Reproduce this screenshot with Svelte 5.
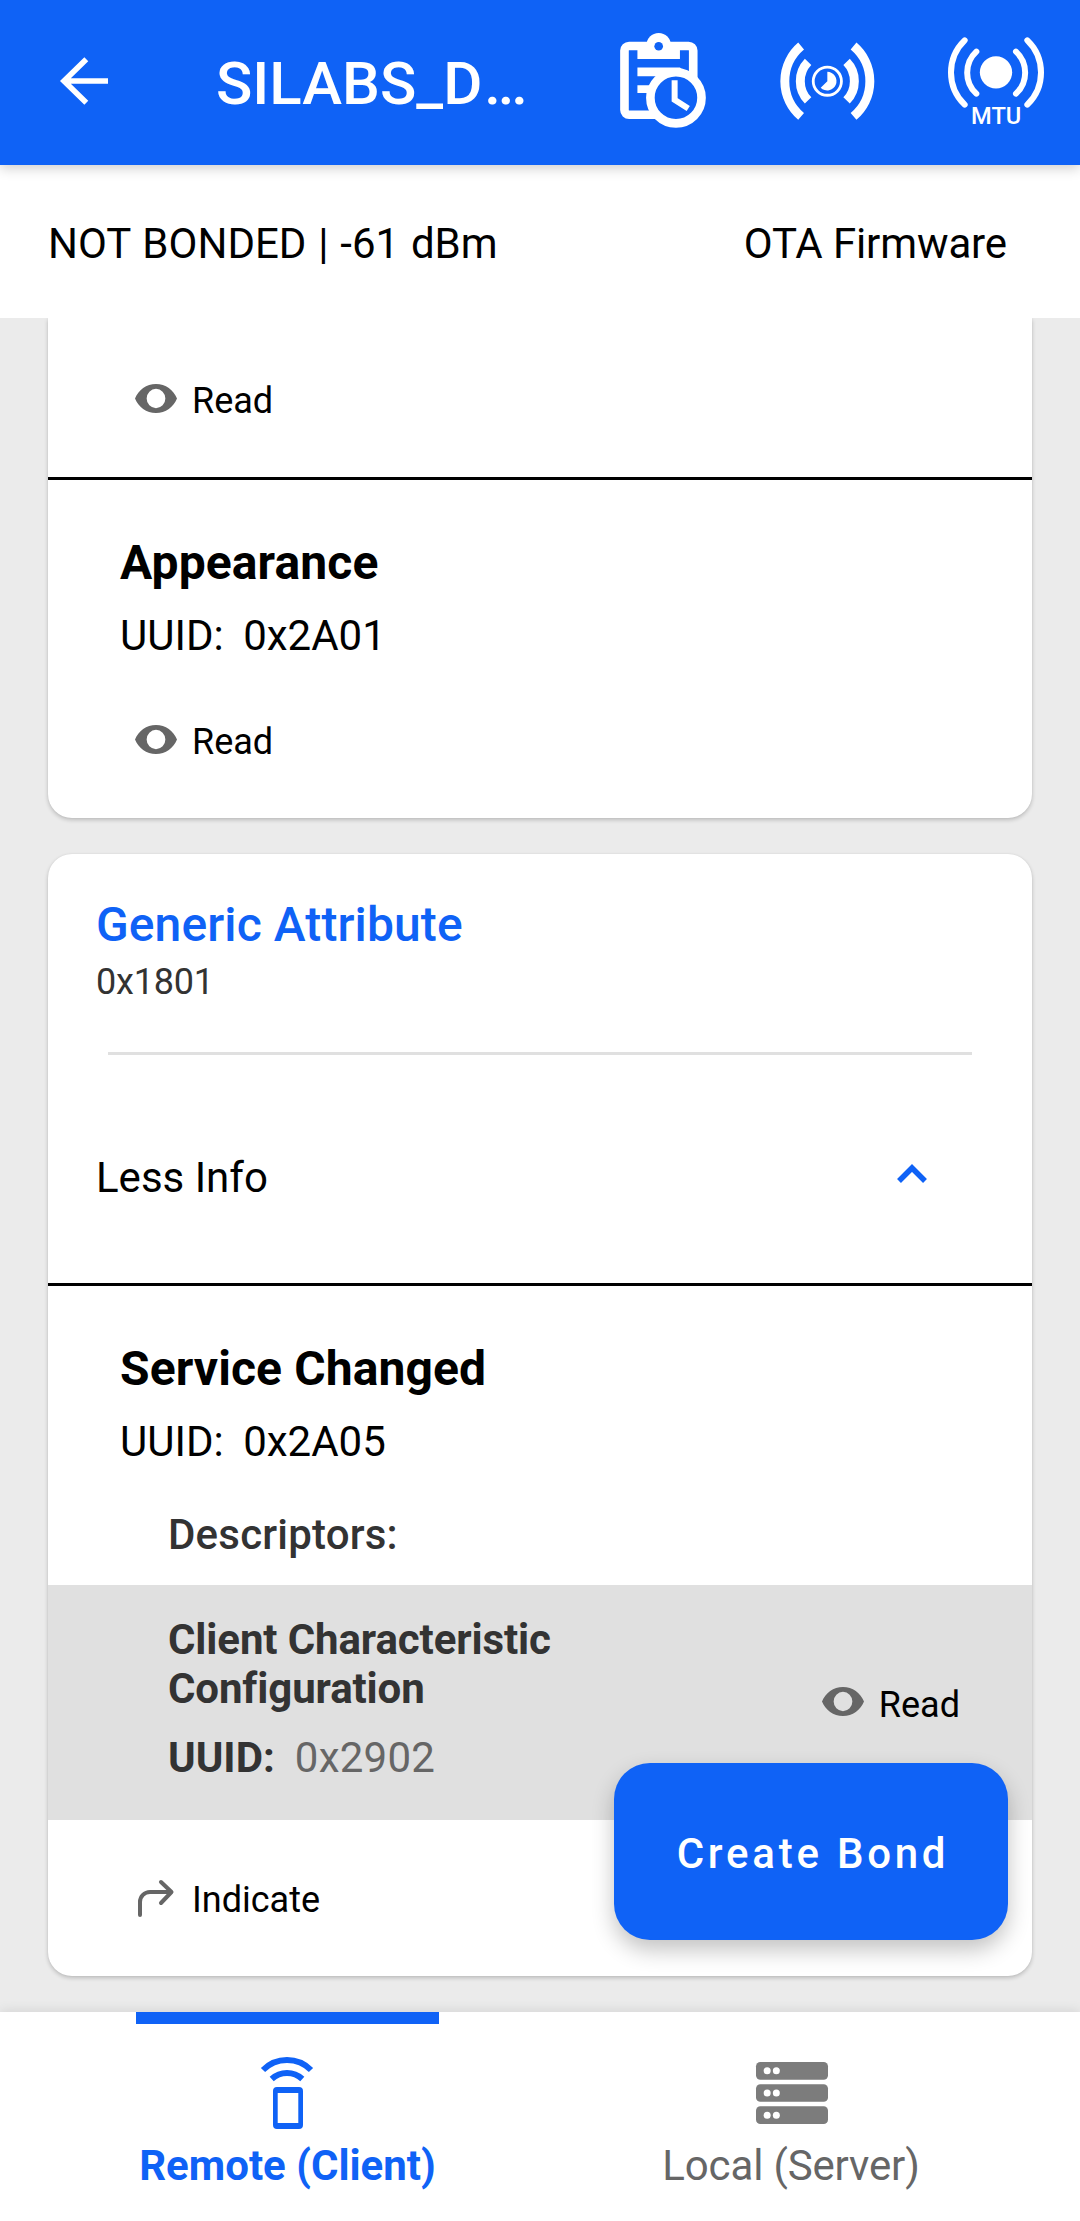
<script>
  const tabs = [
    { id: 'remote', label: 'Remote (Client)', active: true },
    { id: 'local', label: 'Local (Server)', active: false }
  ];
</script>

{#snippet eye()}
  <svg class="eye" viewBox="1 4.5 22 15" preserveAspectRatio="none">
    <path fill-rule="evenodd" d="M12 4.5C7 4.5 2.73 7.61 1 12c1.73 4.39 6 7.5 11 7.5s9.27-3.11 11-7.5c-1.73-4.39-6-7.5-11-7.5zM12 17a4.900 5 0 1 1 0-10 4.900 5 0 0 1 0 10z" />
  </svg>
{/snippet}

{#snippet readAction()}
  <div class="action">
    {@render eye()}
    <span>Read</span>
  </div>
{/snippet}

<div class="screen">
  <header class="appbar">
    <svg class="back" viewBox="0 0 48 48">
      <path d="M26.3 2.2 4 24l22.3 21.8M5 24h43" />
    </svg>
    <h1>SILABS_D<span class="dots">...</span></h1>
    <svg class="clipboard" viewBox="120 98 258 286">
      <rect class="board" x="133" y="137" width="207" height="207" rx="14" />
      <path class="solid" d="M172 140H300V176H172zM172 202H300L330 228H172zM172 255H215V279H172z" />
      <circle class="solid" cx="236" cy="135" r="37" />
      <circle class="hole" cx="236" cy="138" r="13" />
      <circle class="face" cx="288" cy="293" r="77" />
      <path class="hands" d="M284 240V299L325 325" />
    </svg>
    <svg class="phy" viewBox="600 122 285 235">
      <path class="wave" d="M663 134A139 139 0 0 0 663 346M684 182A83.500 83.500 0 0 0 684 298M800 182A83.500 83.500 0 0 1 800 298M821 134A139 139 0 0 1 821 346" />
      <circle class="ring" cx="742" cy="240" r="42.5" />
      <path class="solid" d="M742 240V212A28 28 0 1 1 722 260Z" />
    </svg>
    <svg class="mtu" viewBox="1103 110 288 264">
      <circle class="solid" cx="1247" cy="216" r="48.5" />
      <path class="wave" d="M1153 120A134 134 0 0 0 1153 313M1188 154A86 86 0 0 0 1188 280M1307 154A86 86 0 0 1 1307 280M1341 120A134 134 0 0 1 1341 313" />
      <text x="1247.5" y="371">MTU</text>
    </svg>
  </header>

  <div class="status">
    <span class="bonding">NOT BONDED | -61 dBm</span>
    <span class="ota">OTA Firmware</span>
  </div>

  <main>
    <section class="card continued">
      <div class="characteristic tail">
        {@render readAction()}
      </div>
      <div class="characteristic first">
        <h3>Appearance</h3>
        <p class="uuid">UUID:<span>0x2A01</span></p>
        {@render readAction()}
      </div>
    </section>

    <section class="card">
      <div class="service">
        <h2>Generic Attribute</h2>
        <p>0x1801</p>
      </div>
      <div class="toggle">
        <span>Less Info</span>
        <svg class="chevron" viewBox="0 0 30 18"><path d="M2 16 15 3l13 13" /></svg>
      </div>
      <div class="characteristic second">
        <h3>Service Changed</h3>
        <p class="uuid">UUID:<span>0x2A05</span></p>
        <h4>Descriptors:</h4>
      </div>
      <div class="descriptor">
        <div>
          <strong>Client Characteristic<br />Configuration</strong>
          <p><b>UUID:</b><span>0x2902</span></p>
        </div>
        {@render readAction()}
      </div>
      <div class="action indicate">
        <svg class="turn" viewBox="0 0 36 37"><path d="M2 35V22a10 10 0 0 1 10-10H33M23 2 33.500 12 23 23" /></svg>
        <span>Indicate</span>
      </div>
    </section>

    <button class="bond">Create Bond</button>
  </main>

  <nav>
    {#each tabs as tab (tab.id)}
      <div class="tab" class:active={tab.active}>
        {#if tab.id === 'remote'}
          <svg class="remote" viewBox="0 0 52 72">
            <path class="arc" d="M2 13A33.800 33.800 0 0 1 50 13M10.700 22A22.500 22.500 0 0 1 41.300 22" />
            <path fill-rule="evenodd" d="M16 30H38a4 4 0 0 1 4 4V68a4 4 0 0 1-4 4H16a4 4 0 0 1-4-4V34a4 4 0 0 1 4-4ZM16.700 36V66H37.300V36Z" />
          </svg>
        {:else}
          <svg class="server" viewBox="468 186 216 186">
            {#each [186, 252.500, 319] as y}
              <rect x="468" {y} width="216" height="53" rx="13" />
              <circle cx="501.500" cy={y + 26.500} r="10.500" />
              <circle cx="529" cy={y + 26.500} r="10.500" />
            {/each}
          </svg>
        {/if}
        <span>{tab.label}</span>
      </div>
    {/each}
  </nav>
</div>

<style>
  :global(body) { margin: 0; }
  .screen {
    width: 1080px;
    height: 2221px;
    display: flex;
    flex-direction: column;
    overflow: hidden;
    background: #ebebeb;
    color: #000;
    font: 400 42px/49px Roboto, sans-serif;
  }
  h1, h2, h3, h4, p { margin: 0; }
  svg { display: block; flex: none; overflow: visible; }

  .appbar {
    position: relative;
    z-index: 3;
    box-sizing: border-box;
    height: 165px;
    flex: none;
    display: flex;
    align-items: center;
    padding: 0 36px 4px 60px;
    background: #0f62f6;
    box-shadow: 0 3px 12px rgba(0, 0, 0, 0.2);
    color: #fff;
  }
  .appbar h1 {
    width: 404px;
    margin-left: 108px;
    padding-top: 6px;
    font-size: 60px;
    font-weight: 500;
    line-height: 70px;
  }
  .dots { margin-left: 2px; letter-spacing: -3.2px; }
  .appbar path, .appbar rect, .appbar circle { fill: none; stroke: #fff; }
  .appbar .solid { fill: #fff; stroke: none; }
  .back { width: 48px; height: 48px; stroke-width: 5.6; }
  .clipboard { width: 86px; height: 95px; }
  .clipboard .board { stroke-width: 26; }
  .appbar .clipboard .hole { fill: #0f62f6; stroke: none; }
  .appbar .clipboard .face { fill: #0f62f6; stroke-width: 26; }
  .clipboard .hands { stroke-width: 18; }
  .phy { width: 95px; height: 78px; margin-left: 74px; }
  .phy .wave { stroke-width: 27; }
  .phy .ring { stroke-width: 8.5; }
  .mtu { width: 96px; height: 88px; margin-left: 73px; }
  .mtu .wave { stroke-width: 18; stroke-linecap: round; }
  .mtu text { fill: #fff; font-size: 71px; font-weight: 500; text-anchor: middle; }

  .status {
    position: relative;
    z-index: 2;
    box-sizing: border-box;
    height: 153px;
    flex: none;
    display: flex;
    justify-content: space-between;
    align-items: center;
    padding: 4px 73px 0 48px;
    background: #fff;
  }
  .bonding { word-spacing: 1.4px; }
  .ota { letter-spacing: -0.12px; }

  main {
    position: relative;
    flex: 1;
    display: flex;
    flex-direction: column;
    gap: 36px;
    padding: 0 48px 36px;
  }
  .card {
    border-radius: 24px;
    background: #fff;
    box-shadow: 0 2px 4px rgba(0, 0, 0, 0.2), 0 0 2px rgba(0, 0, 0, 0.06);
  }
  .continued { border-radius: 0 0 24px 24px; }

  .action {
    display: flex;
    gap: 15px;
    font-size: 36px;
    line-height: 42px;
  }
  .eye { width: 42px; height: 29px; margin-top: 4px; fill: #666; }

  .characteristic { padding: 0 72px; }
  .characteristic .action { margin-left: 15px; }
  .characteristic.tail { padding-top: 62px; padding-bottom: 55px; }
  .characteristic.first { border-top: 3px solid #000; padding-bottom: 55px; }
  .characteristic.second { border-top: 3px solid #000; }
  h3 {
    padding-top: 55px;
    font-size: 48px;
    font-weight: 700;
    line-height: 56px;
    letter-spacing: 0.1px;
  }
  .uuid { margin-top: 20px; }
  .uuid span { margin-left: 19.5px; }
  .first .action { margin-top: 61px; }
  h4 { margin: 44px 0 0 48px; padding-bottom: 26px; font-size: 42px; font-weight: 500; letter-spacing: 0.2px; color: #333; }

  .service {
    margin: 0 60px;
    padding: 43px 0 49px;
    border-bottom: 3px solid #e0e0e0;
  }
  .service h2 { margin-left: -12px; font-size: 48px; font-weight: 500; line-height: 56px; letter-spacing: 0.1px; color: #0f62f6; }
  .service p { margin: 8px 0 0 -12px; font-size: 36px; line-height: 42px; letter-spacing: -0.2px; color: #333; }

  .toggle {
    display: flex;
    justify-content: space-between;
    padding: 98px 105px 81px 48px;
  }
  .chevron { width: 30px; height: 18px; margin-top: 12px; fill: none; stroke: #0f62f6; stroke-width: 5.500; }

  .descriptor {
    display: flex;
    justify-content: space-between;
    box-sizing: border-box;
    height: 235px;
    padding: 30px 72px 0 120px;
    background: #e0e0e0;
    color: #333;
  }
  .descriptor strong { display: block; letter-spacing: -0.12px; font-variant-ligatures: common-ligatures; }
  .descriptor p { margin-top: 20px; color: #666; }
  .descriptor b { color: #333; }
  .descriptor p span { margin-left: 20px; letter-spacing: 0.25px; }
  .descriptor .action { margin-top: 69px; color: #000; }
  .descriptor .eye { margin-top: 3px; }

  .indicate { padding: 59px 0 55px 90px; gap: 18px; }
  .turn { width: 36px; height: 37px; margin-top: 1px; fill: none; stroke: #666; stroke-width: 4; stroke-linecap: round; stroke-linejoin: round; }

  .bond {
    position: absolute;
    right: 72px;
    bottom: 72px;
    width: 394px;
    height: 177px;
    padding: 4px 0 0 4px;
    border: 0;
    border-radius: 36px;
    background: #0f62f6;
    box-shadow: 0 10px 22px rgba(0, 0, 0, 0.24);
    color: #fff;
    font: 500 42px/49px Roboto, sans-serif;
    letter-spacing: 3.75px;
  }

  nav {
    position: relative;
    height: 209px;
    flex: none;
    display: flex;
    justify-content: center;
    background: #fff;
    box-shadow: 0 0 12px rgba(0, 0, 0, 0.12);
    color: #666;
  }
  .tab {
    box-sizing: border-box;
    width: 303px;
    margin: 0 101px;
    border-top: 12px solid transparent;
    display: flex;
    flex-direction: column;
    align-items: center;
    white-space: nowrap;
  }
  .tab.active { border-color: #0f62f6; color: #0f62f6; font-weight: 700; }
  .tab span { margin-top: auto; padding-bottom: 31px; }
  .tab:not(.active) span { padding-right: 3px; letter-spacing: -0.15px; }
  .remote { width: 52px; height: 72px; margin: 33px 1px 0 0; fill: #0f62f6; }
  .remote .arc { fill: none; stroke: #0f62f6; stroke-width: 6; }
  .server { width: 72px; height: 62px; margin: 38px 1px 0 0; fill: #7c7c7c; }
  .server circle { fill: #fff; }
</style>
